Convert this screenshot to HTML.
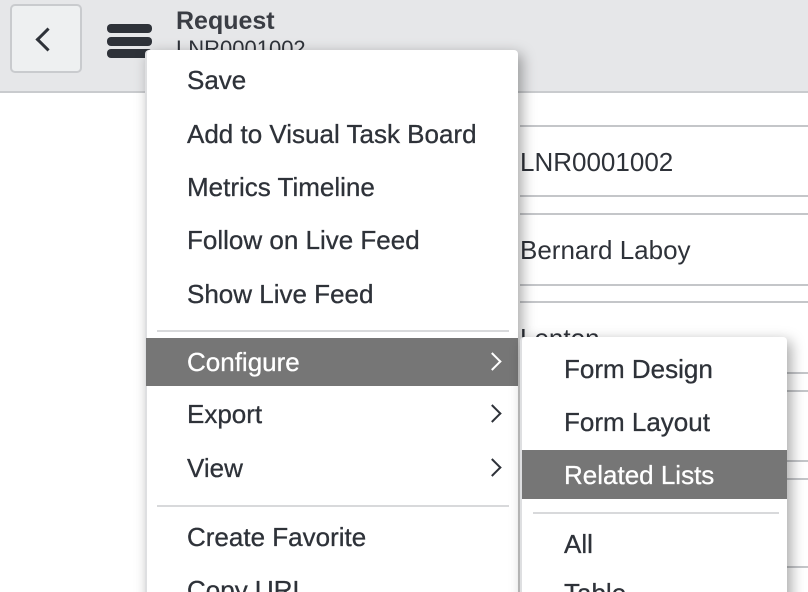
<!DOCTYPE html>
<html><head><style>
*{margin:0;padding:0;box-sizing:border-box}
html,body{width:808px;height:592px;overflow:hidden}
body{background:#fff;font-family:"Liberation Sans",sans-serif;color:#2e3239;position:relative}
.hdr{position:absolute;left:0;top:0;width:808px;height:93px;background:#e6e7e9;border-bottom:2px solid #c9cbce}
.back{position:absolute;left:10px;top:4px;width:72px;height:69px;border:2px solid #c9cbce;border-radius:5px;background:#eef0f1}
.bar{position:absolute;left:107px;width:45px;height:9px;border-radius:4px;background:#2e3239}
.t{position:absolute;white-space:nowrap}
.ln{position:absolute;left:520px;width:288px;height:2px;background:#c4c6c9}
.menu{position:absolute;background:#fff;border-left:2px solid #dedfe1;box-shadow:4px 4px 14px rgba(0,0,0,.35);border-radius:4px 4px 0 0}
.it{position:absolute;font-size:26px;white-space:nowrap;color:#2e3239;-webkit-text-stroke:0.3px #2e3239}
.hl{position:absolute;background:#767676}
.sep{position:absolute;height:2px;background:#d8d9db}
.chev{position:absolute;width:13px;height:13px;border-top:2.5px solid #2e3239;border-right:2.5px solid #2e3239;transform:rotate(45deg)}
</style></head><body>
<div class="hdr"></div>
<div class="back"><div class="chev" style="left:27px;top:25px;transform:rotate(-135deg);width:17px;height:17px;border-width:3px"></div></div>
<div class="bar" style="top:24px"></div><div class="bar" style="top:37px"></div><div class="bar" style="top:49px"></div>
<div class="t" style="left:176px;top:7px;font-size:25px;font-weight:bold;color:#3a3d44">Request</div>
<div class="t" style="left:176px;top:36px;font-size:22px">LNR0001002</div>

<div class="ln" style="top:125px"></div>
<div class="t" style="left:520px;top:147px;font-size:26px">LNR0001002</div>
<div class="ln" style="top:195px"></div>
<div class="ln" style="top:213px"></div>
<div class="t" style="left:520px;top:235px;font-size:26px">Bernard Laboy</div>
<div class="ln" style="top:284px"></div>
<div class="ln" style="top:301px"></div>
<div class="t" style="left:520px;top:323px;font-size:26px">Lenton</div>
<div class="ln" style="top:372px"></div>
<div class="ln" style="top:390px"></div>
<div class="ln" style="top:460px"></div>
<div class="ln" style="top:478px"></div>
<div class="ln" style="top:566px"></div>

<div class="menu" style="left:145px;top:50px;width:373px;height:560px">
<div class="it" style="left:40px;top:15px">Save</div>
<div class="it" style="left:40px;top:69px">Add to Visual Task Board</div>
<div class="it" style="left:40px;top:122px">Metrics Timeline</div>
<div class="it" style="left:40px;top:175px">Follow on Live Feed</div>
<div class="it" style="left:40px;top:229px">Show Live Feed</div>
<div class="sep" style="left:10px;top:280px;width:352px"></div>
<div class="hl" style="left:-1px;top:288px;width:372px;height:48px"></div>
<div class="it" style="left:40px;top:297px;color:#fff;-webkit-text-stroke:0.3px #fff">Configure</div>
<div class="chev" style="left:339px;top:305px;border-color:#fff"></div>
<div class="it" style="left:40px;top:349px">Export</div>
<div class="chev" style="left:339px;top:357px"></div>
<div class="it" style="left:40px;top:403px">View</div>
<div class="chev" style="left:339px;top:411px"></div>
<div class="sep" style="left:10px;top:455px;width:352px"></div>
<div class="it" style="left:40px;top:472px">Create Favorite</div>
<div class="it" style="left:40px;top:525px">Copy URL</div>
</div>

<div class="menu" style="left:520px;top:337px;width:267px;height:270px">
<div class="it" style="left:42px;top:17px">Form Design</div>
<div class="it" style="left:42px;top:70px">Form Layout</div>
<div class="hl" style="left:0;top:113px;width:265px;height:49px"></div>
<div class="it" style="left:42px;top:123px;color:#fff;-webkit-text-stroke:0.3px #fff">Related Lists</div>
<div class="sep" style="left:11px;top:175px;width:246px"></div>
<div class="it" style="left:42px;top:192px">All</div>
<div class="it" style="left:42px;top:241px">Table</div>
</div>
</body></html>
